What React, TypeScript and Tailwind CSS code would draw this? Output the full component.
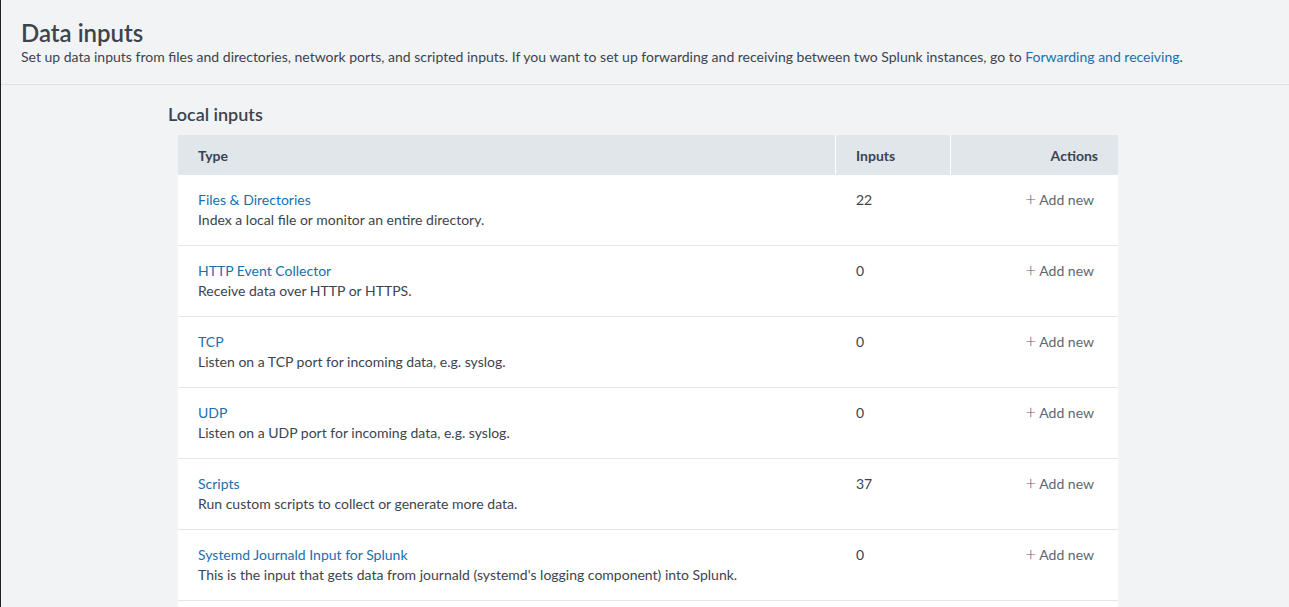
import React from "react";

const rows = [
  { name: "Files & Directories", desc: "Index a local file or monitor an entire directory.", n: "22" },
  { name: "HTTP Event Collector", desc: "Receive data over HTTP or HTTPS.", n: "0" },
  { name: "TCP", desc: "Listen on a TCP port for incoming data, e.g. syslog.", n: "0" },
  { name: "UDP", desc: "Listen on a UDP port for incoming data, e.g. syslog.", n: "0" },
  { name: "Scripts", desc: "Run custom scripts to collect or generate more data.", n: "37" },
  {
    name: "Systemd Journald Input for Splunk",
    desc: "This is the input that gets data from journald (systemd's logging component) into Splunk.",
    n: "0",
  },
];

export default function App() {
  return (
    <div
      className="min-h-screen bg-[#f2f3f5] border-l border-[#1d1f23] text-[#3c444d]"
      style={{ fontFamily: "Lato, 'Open Sans', sans-serif" }}
    >
      <div className="px-5 pt-[19px] pb-[17px] border-b border-[#dfe3e8]">
        <h1 className="text-[24px] leading-[28px] font-semibold text-[#3c444d]">Data inputs</h1>
        <p className="text-[14px] leading-[20px]">
          Set up data inputs from files and directories, network ports, and scripted inputs. If you want to set up
          forwarding and receiving between two Splunk instances, go to{" "}
          <a className="text-[#1a6fae]" href="#">
            Forwarding and receiving
          </a>
          .
        </p>
      </div>
      <div className="pl-[167px] pt-[18px]">
        <h2 className="text-[18px] leading-[22px] font-semibold text-[#3c444d] mb-[10px]">Local inputs</h2>
        <div className="ml-[10px] w-[940px] bg-white">
          <div className="grid grid-cols-[658px_115px_1fr] h-10 bg-[#e1e6eb] text-[14px] font-bold items-center">
            <div className="pl-5 h-full flex items-center border-r border-white">Type</div>
            <div className="pl-5 h-full flex items-center border-r border-white">Inputs</div>
            <div className="pr-5 h-full flex items-center justify-end">Actions</div>
          </div>
          {rows.map((r) => (
            <div
              key={r.name}
              className="grid grid-cols-[658px_115px_1fr] border-b border-[#e1e6eb] py-[15px] text-[14px] leading-[20px]"
            >
              <div className="pl-5">
                <a href="#" className="text-[#1a6fae] block">
                  {r.name}
                </a>
                <div>{r.desc}</div>
              </div>
              <div className="pl-5">{r.n}</div>
              <div className="pr-6 flex justify-end">
                <span className="text-[#5c6773] flex items-center gap-[3px] h-5">
                  <span className="text-[19px] leading-[20px] font-light -mt-[2px]">+</span>
                  <span className="-mt-[1px]">Add new</span>
                </span>
              </div>
            </div>
          ))}
          <div className="h-10" />
        </div>
      </div>
    </div>
  );
}
